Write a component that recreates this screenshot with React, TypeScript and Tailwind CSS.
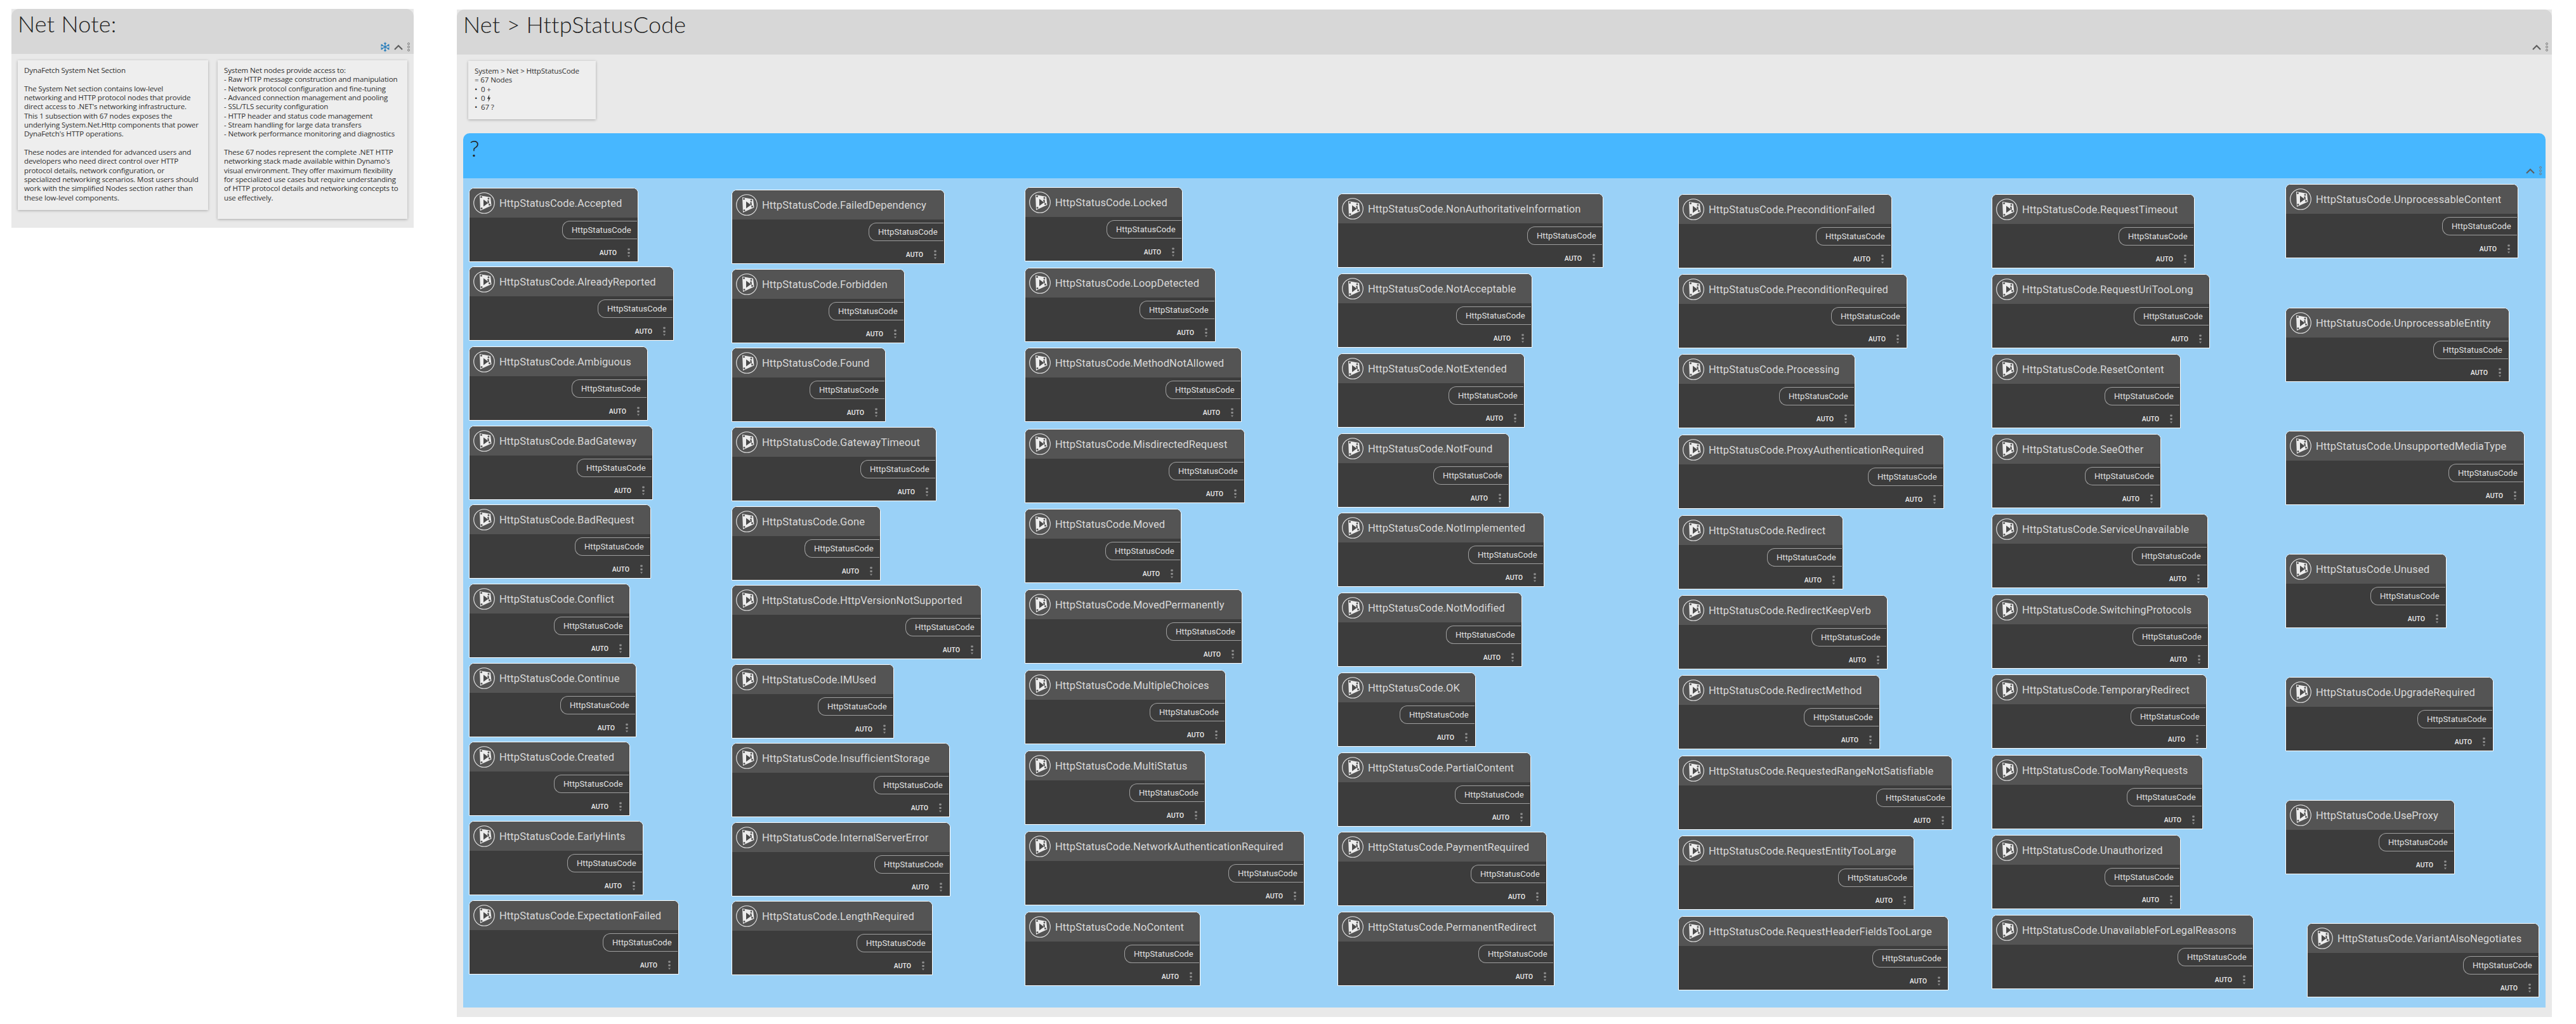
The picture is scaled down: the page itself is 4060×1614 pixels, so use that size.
import React from "react";

type N = [string, number, number, number];
const toNodes = (x: number, rows: [string, number, number][]): N[] => rows.map(([n, y, w]) => [n, x, y, w]);

const nodes: N[] = [
  ...toNodes(739, [
    ["Accepted", 296, 267], ["AlreadyReported", 420, 323], ["Ambiguous", 546, 282], ["BadGateway", 671, 290], ["BadRequest", 795, 287],
    ["Conflict", 920, 254], ["Continue", 1045, 264], ["Created", 1169, 254], ["EarlyHints", 1294, 275], ["ExpectationFailed", 1419, 331],
  ]),
  ...toNodes(1153, [
    ["FailedDependency", 299, 336], ["Forbidden", 424, 273], ["Found", 548, 243], ["GatewayTimeout", 673, 323], ["Gone", 798, 235],
    ["HttpVersionNotSupported", 922, 394], ["IMUsed", 1047, 256], ["InsufficientStorage", 1171, 344], ["InternalServerError", 1296, 345], ["LengthRequired", 1420, 317],
  ]),
  ...toNodes(1615, [
    ["Locked", 295, 249], ["LoopDetected", 422, 301], ["MethodNotAllowed", 548, 342], ["MisdirectedRequest", 676, 347], ["Moved", 802, 247],
    ["MovedPermanently", 929, 343], ["MultipleChoices", 1056, 317], ["MultiStatus", 1183, 285], ["NetworkAuthenticationRequired", 1310, 441], ["NoContent", 1437, 277],
  ]),
  ...toNodes(2108, [
    ["NonAuthoritativeInformation", 305, 419], ["NotAcceptable", 431, 307], ["NotExtended", 557, 295], ["NotFound", 683, 271], ["NotImplemented", 808, 326],
    ["NotModified", 934, 291], ["OK", 1060, 218], ["PartialContent", 1186, 305], ["PaymentRequired", 1311, 330], ["PermanentRedirect", 1437, 342],
  ]),
  ...toNodes(2645, [
    ["PreconditionFailed", 306, 337], ["PreconditionRequired", 432, 361], ["Processing", 558, 279], ["ProxyAuthenticationRequired", 685, 419], ["Redirect", 812, 260],
    ["RedirectKeepVerb", 938, 330], ["RedirectMethod", 1064, 318], ["RequestedRangeNotSatisfiable", 1191, 432], ["RequestEntityTooLarge", 1317, 372], ["RequestHeaderFieldsTooLarge", 1444, 426],
  ]),
  ...toNodes(3139, [
    ["RequestTimeout", 306, 320], ["RequestUriTooLong", 432, 344], ["ResetContent", 558, 298], ["SeeOther", 684, 267], ["ServiceUnavailable", 810, 341],
    ["SwitchingProtocols", 937, 342], ["TemporaryRedirect", 1063, 339], ["TooManyRequests", 1190, 333], ["Unauthorized", 1316, 298], ["UnavailableForLegalReasons", 1442, 413],
  ]),
  ...toNodes(3602, [
    ["UnprocessableContent", 290, 367], ["UnprocessableEntity", 485, 353], ["UnsupportedMediaType", 679, 377], ["Unused", 873, 254], ["UpgradeRequired", 1067, 328], ["UseProxy", 1261, 267],
  ]),
  ["VariantAlsoNegotiates", 3636, 1455, 366],
];

function Logo() {
  return (
    <svg viewBox="0 0 34 34" className="w-[34px] h-[34px] shrink-0">
      <circle cx="17" cy="17" r="16.3" fill="none" stroke="#ececec" strokeWidth="1.1" />
      <path d="M10 5 L27 8 L28.5 21 L11 29 Z" fill="#ececec" />
      <path d="M16 11.5 L23.5 17 L16 22.5 Z" fill="#4a4a4a" />
      <path d="M22 13 L24.5 12.5 L25 18 L23 17 Z" fill="#545454" />
      <circle cx="12.5" cy="7.5" r="1.5" fill="#555" />
      <circle cx="24" cy="10" r="1.5" fill="#555" />
      <circle cx="25.5" cy="19.5" r="1.5" fill="#555" />
      <circle cx="13" cy="25.5" r="1.5" fill="#555" />
    </svg>
  );
}

function NodeMenu() {
  return (
    <svg viewBox="0 0 6 15" className="w-[6px] h-[15px]">
      <rect x="1.3" y="0.5" width="3.4" height="3" rx="0.8" fill="#8e8e8e" />
      <rect x="1.3" y="6" width="3.4" height="3" rx="0.8" fill="#8e8e8e" />
      <path d="M1 11.5 H5 L3 14.5 Z" fill="#8e8e8e" />
    </svg>
  );
}

function Node({ n }: { n: N }) {
  const [name, x, y, w] = n;
  return (
    <div
      className="absolute h-[117px] border border-white rounded-t-[8px] bg-[#3c3c3c] flex flex-col overflow-hidden font-['Roboto',sans-serif]"
      style={{ left: x - 730, top: y - 281, width: w }}
    >
      <div className="h-[46px] shrink-0 bg-[#545454] flex items-center pl-[6px] gap-[7px]">
        <Logo />
        <span className="pt-[2px] text-[16.5px] leading-none text-[#d9d9d9] whitespace-nowrap tracking-[0.1px]">HttpStatusCode.{name}</span>
      </div>
      <div className="flex justify-end pt-[5px] pr-px">
        <div className="w-[118px] h-[29px] border border-r-0 border-[#a0a0a0] rounded-l-[12px] flex items-center pl-[14px] text-[13px] tracking-[0.1px] text-[#e2e2e2] whitespace-nowrap">
          HttpStatusCode
        </div>
      </div>
      <div className="flex justify-end items-center pt-[14px] pr-[11px] gap-[16px]">
        <span className="text-[10.5px] leading-[14px] font-medium text-[#eeeeee]">AUTO</span>
        <NodeMenu />
      </div>
    </div>
  );
}

function Grip() {
  return (
    <svg viewBox="0 0 6 14" className="w-[6px] h-[14px]">
      <circle cx="3" cy="2" r="1.5" fill="none" stroke="#777" strokeWidth="0.9" />
      <circle cx="3" cy="7" r="1.5" fill="none" stroke="#777" strokeWidth="0.9" />
      <circle cx="3" cy="12" r="1.5" fill="none" stroke="#777" strokeWidth="0.9" />
    </svg>
  );
}

function Chevron() {
  return (
    <svg viewBox="0 0 14 9" className="w-[14px] h-[9px]">
      <path d="M1 8 L7 2 L13 8" fill="none" stroke="#5f5f5f" strokeWidth="2.2" />
    </svg>
  );
}

function Snow() {
  return (
    <svg viewBox="0 0 16 16" className="w-[16px] h-[16px]" fill="none" stroke="#1574b8" strokeWidth="1.1">
      <path d="M8 0.5 V15.5 M1.5 4.2 L14.5 11.8 M14.5 4.2 L1.5 11.8" />
      <path d="M6.2 1.8 L8 3.4 L9.8 1.8 M6.2 14.2 L8 12.6 L9.8 14.2 M1.2 6.6 L3.4 6 L2.8 3.6 M14.8 6.6 L12.6 6 L13.2 3.6 M1.2 9.4 L3.4 10 L2.8 12.4 M14.8 9.4 L12.6 10 L13.2 12.4" />
    </svg>
  );
}

const card1 = `DynaFetch System Net Section

The System Net section contains low-level
networking and HTTP protocol nodes that provide
direct access to .NET's networking infrastructure.
This 1 subsection with 67 nodes exposes the
underlying System.Net.Http components that power
DynaFetch's HTTP operations.

These nodes are intended for advanced users and
developers who need direct control over HTTP
protocol details, network configuration, or
specialized networking scenarios. Most users should
work with the simplified Nodes section rather than
these low-level components.`;

const card2 = `System Net nodes provide access to:
- Raw HTTP message construction and manipulation
- Network protocol configuration and fine-tuning
- Advanced connection management and pooling
- SSL/TLS security configuration
- HTTP header and status code management
- Stream handling for large data transfers
- Network performance monitoring and diagnostics

These 67 nodes represent the complete .NET HTTP
networking stack made available within Dynamo's
visual environment. They offer maximum flexibility
for specialized use cases but require understanding
of HTTP protocol details and networking concepts to
use effectively.`;

const noteText = "bg-[#eeeeee] shadow-[0_1px_4px_rgba(0,0,0,0.28)] pl-[10px] pt-[9px] text-[11.6px] leading-[14.33px] text-[#2e2e2e] whitespace-pre font-['Open_Sans',sans-serif] tracking-[-0.15px]";
const titleText = "text-[36px] leading-[46px] text-[#222222] font-light font-['Lato',sans-serif] tracking-[0.25px]";

export default function App() {
  return (
    <div className="w-[4060px] h-[1614px] bg-white flex items-start pl-[18px] pt-[14px] gap-[68px] overflow-hidden">
      <section className="w-[634px] h-[345px] bg-[#e9e9e9]">
        <header className="h-[71px] bg-[#d7d7d7] rounded-t-[12px] flex flex-col justify-between pl-[10px] pr-[5px] pb-[3px]">
          <h1 className={titleText}>Net Note:</h1>
          <div className="flex justify-end items-center gap-[6px] h-[16px]">
            <Snow />
            <Chevron />
            <Grip />
          </div>
        </header>
        <div className="flex items-start pl-[10px] pt-[10px] gap-[15px]">
          <div className={`w-[300px] h-[236px] ${noteText}`}>{card1}</div>
          <div className={`w-[299px] h-[250px] ${noteText}`}>{card2}</div>
        </div>
      </section>

      <section className="w-[3302px] h-[1588px] mt-px bg-[#e9e9e9] flex flex-col">
        <header className="h-[71px] shrink-0 bg-[#d7d7d7] rounded-t-[12px] flex flex-col justify-between pl-[10px] pr-[5px] pb-[5px]">
          <h1 className={titleText}>Net &gt; HttpStatusCode</h1>
          <div className="flex justify-end items-center gap-[6px]">
            <Chevron />
            <Grip />
          </div>
        </header>
        <div className={`ml-[18px] mt-[10px] w-[201px] h-[92px] shrink-0 ${noteText}`}>
          {"System > Net > HttpStatusCode\n= 67 Nodes\n•  0 +\n"}
          <span>•  0 </span>
          <svg viewBox="0 0 8 14" className="inline w-[7px] h-[12px] align-[-2px]">
            <path d="M5 0 L1 8 H3.6 L2.6 14 L7 5.6 H4.4 Z" fill="#3a3a3a" />
          </svg>
          {"\n•  67 ?"}
        </div>
        <div className="ml-[10px] mt-[22px] w-[3282px] h-[1378px] shrink-0 flex flex-col">
          <header className="h-[71px] shrink-0 bg-[#47b7ff] rounded-t-[10px] flex flex-col justify-between pl-[10px] pr-[5px] pb-[5px]">
            <h2 className={titleText}>?</h2>
            <div className="flex justify-end items-center gap-[6px]">
              <Chevron />
              <Grip />
            </div>
          </header>
          <div className="relative flex-1 bg-[#9ad1f7]">
            {nodes.map((n) => (
              <Node key={n[0]} n={n} />
            ))}
          </div>
        </div>
      </section>
    </div>
  );
}
